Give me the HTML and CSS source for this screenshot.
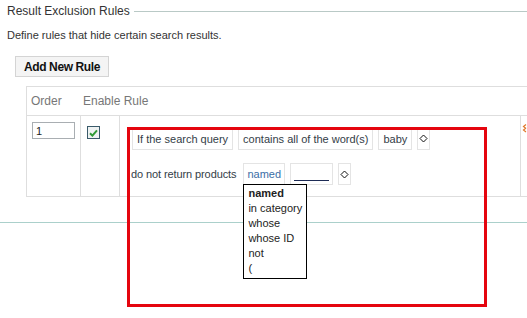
FILE: index.html
```html
<!DOCTYPE html>
<html lang="en">
<head>
    <meta charset="UTF-8">
    <title>Result Exclusion Rules</title>
    <link rel="stylesheet" href="styles.css">
</head>
<body>
    <div class="section">
        <div class="legend">
            <span class="legend-title">Result Exclusion Rules</span>
            <span class="legend-line"></span>
        </div>
        <p class="intro">Define rules that hide certain search results.</p>
        <button class="add-btn" type="button">Add New Rule</button>

        <table class="rules">
            <colgroup>
                <col class="c-order">
                <col class="c-enable">
                <col class="c-rule">
                <col class="c-remove">
            </colgroup>
            <thead>
                <tr class="head-row">
                    <th class="first">Order</th>
                    <th>Enable Rule</th>
                    <th></th>
                    <th></th>
                </tr>
            </thead>
            <tbody>
                <tr class="rule-row">
                    <td class="first order-cell"><input class="order-input" type="text" value="1"></td>
                    <td class="enable-cell">
                        <span class="check">
                            <svg width="9" height="8" viewBox="0 0 9 8"><path d="M1 4.2 L3.4 6.6 L8 1.4" fill="none" stroke="#2f9a35" stroke-width="2"/></svg>
                        </span>
                    </td>
                    <td class="rule-cell">
                        <div class="clause">
                            <span class="chip">If the search query</span>
                            <span class="chip">contains all of the word(s)</span>
                            <span class="chip">baby</span>
                            <span class="chip chip-more">
                                <svg width="9" height="9" viewBox="0 0 9 9"><path d="M4.5 1 L8 4.5 L4.5 8 L1 4.5 Z" fill="#fff" stroke="#111" stroke-width="1"/></svg>
                            </span>
                        </div>
                        <div class="clause">
                            <span class="clause-label">do not return products</span>
                            <span class="chip chip-link">named
                                <span class="menu">
                                    <span class="menu-item selected">named</span>
                                    <span class="menu-item">in category</span>
                                    <span class="menu-item">whose</span>
                                    <span class="menu-item">whose ID</span>
                                    <span class="menu-item">not</span>
                                    <span class="menu-item">(</span>
                                </span>
                            </span>
                            <span class="chip chip-blank"><span class="blank-line"></span></span>
                            <span class="chip chip-more">
                                <svg width="9" height="9" viewBox="0 0 9 9"><path d="M4.5 1 L8 4.5 L4.5 8 L1 4.5 Z" fill="#fff" stroke="#111" stroke-width="1"/></svg>
                            </span>
                        </div>
                    </td>
                    <td class="remove-cell">
                        <svg width="8" height="10" viewBox="0 0 8 10"><path d="M5 1.5 L2.5 3.5 L5 5.5 M5 5 L2.5 7 L5 9" fill="none" stroke="#e0782a" stroke-width="1.2"/></svg>
                    </td>
                </tr>
            </tbody>
        </table>

        <div class="section-end"></div>

        <!-- annotation frame drawn over the rule -->
        <div class="highlight"></div>
    </div>
</body>
</html>
```

FILE: styles.css
```css
html, body {
    margin: 0;
    padding: 0;
    overflow: hidden;
    background-color: #fff;
}
body {
    font-family: "Liberation Sans", Arial, sans-serif;
    color: #333;
}
.section {
    position: relative;
    width: 527px;
    height: 318px;
}
.legend {
    display: flex;
    align-items: center;
    padding: 3px 0 0 7px;
    height: 16px;
}
.legend-title {
    font-size: 12px;
    color: #333;
    white-space: nowrap;
}
.legend-line {
    flex: 1;
    margin-left: 4px;
    border-top: 1px solid #b9c9c6;
}
.intro {
    margin: 9px 0 0 7px;
    font-size: 11px;
    line-height: 14px;
    color: #333;
}
.add-btn {
    display: block;
    margin: 14px 0 0 15px;
    width: 94px;
    height: 21px;
    padding: 0;
    font-family: "Liberation Sans", Arial, sans-serif;
    font-size: 12px;
    font-weight: bold;
    letter-spacing: -0.4px;
    color: #111;
    background-color: #f4f4f4;
    border: 1px solid #d4d4d4;
}
.rules {
    margin: 9px 0 0 26px;
    table-layout: fixed;
    border-collapse: separate;
    border-spacing: 0;
    width: 524px;
    font-size: 11px;
}
.c-order { width: 54px; }
.c-enable { width: 39px; }
.c-rule { width: 401px; }
.c-remove { width: 30px; }
.head-row {
    height: 29px;
}
.rule-row {
    height: 82px;
}
.rules th {
    padding: 0 0 0 4px;
    border-top: 1px solid #dedede;
    font-size: 12px;
    font-weight: normal;
    color: #777;
    text-align: left;
    white-space: nowrap;
}
.rules th + th {
    padding-left: 3px;
}
.rules th.first,
.rules td {
    border-left: 1px solid #dedede;
}
.rules td {
    padding: 0;
    border-top: 1px solid #dedede;
    border-bottom: 1px solid #dedede;
    vertical-align: top;
}
.rules .order-cell {
    padding: 6px 0 0 5px;
}
.order-input {
    display: block;
    box-sizing: border-box;
    width: 43px;
    height: 17px;
    padding: 0 0 0 3px;
    border: 1px solid #a9aeb2;
    font-family: "Liberation Sans", Arial, sans-serif;
    font-size: 11px;
    color: #222;
}
.rules .enable-cell {
    padding: 10px 0 0 6px;
}
.check {
    display: flex;
    align-items: center;
    justify-content: center;
    box-sizing: border-box;
    width: 13px;
    height: 13px;
    border: 1px solid #3a5a6a;
    background-color: #eef2f2;
}
.rules .rule-cell {
    padding: 11px 0 0 12px;
}
.clause {
    display: flex;
    align-items: center;
    gap: 5px;
    height: 23px;
}
.clause + .clause {
    margin-top: 13px;
    height: 22px;
}
.clause-label {
    margin-left: -1px;
    margin-right: 2px;
    letter-spacing: -0.1px;
    color: #333d47;
    white-space: nowrap;
}
.chip {
    position: relative;
    display: flex;
    align-items: center;
    box-sizing: border-box;
    height: 100%;
    padding: 0 4px;
    border: 1px solid #e4e4e4;
    color: #333d47;
    white-space: nowrap;
}
.chip-more {
    padding: 0 1px;
}
.chip-link {
    padding: 0 3px;
    color: #3b6ea5;
}
.chip-blank {
    width: 43px;
    padding: 0 3px;
}
.blank-line {
    display: block;
    width: 36px;
    margin-top: 12px;
    border-bottom: 1px solid #1d2b55;
}
.menu {
    position: absolute;
    top: 100%;
    left: -1px;
    z-index: 2;
    display: flex;
    flex-direction: column;
    box-sizing: border-box;
    width: 64px;
    height: 95px;
    padding: 1px 0 0 4px;
    border: 1px solid #000;
    background-color: #fff;
}
.menu-item {
    line-height: 15px;
    color: #222;
}
.menu-item.selected {
    font-weight: bold;
}
.rules .remove-cell {
    padding: 7px 0 0 0;
}
.remove-cell svg {
    display: block;
}
.section-end {
    margin-top: 25px;
    border-top: 1px solid #abd0cb;
}
.highlight {
    position: absolute;
    left: 127px;
    top: 127px;
    width: 360px;
    height: 180px;
    box-sizing: border-box;
    border: 3px solid #e5050f;
    pointer-events: none;
}
```
